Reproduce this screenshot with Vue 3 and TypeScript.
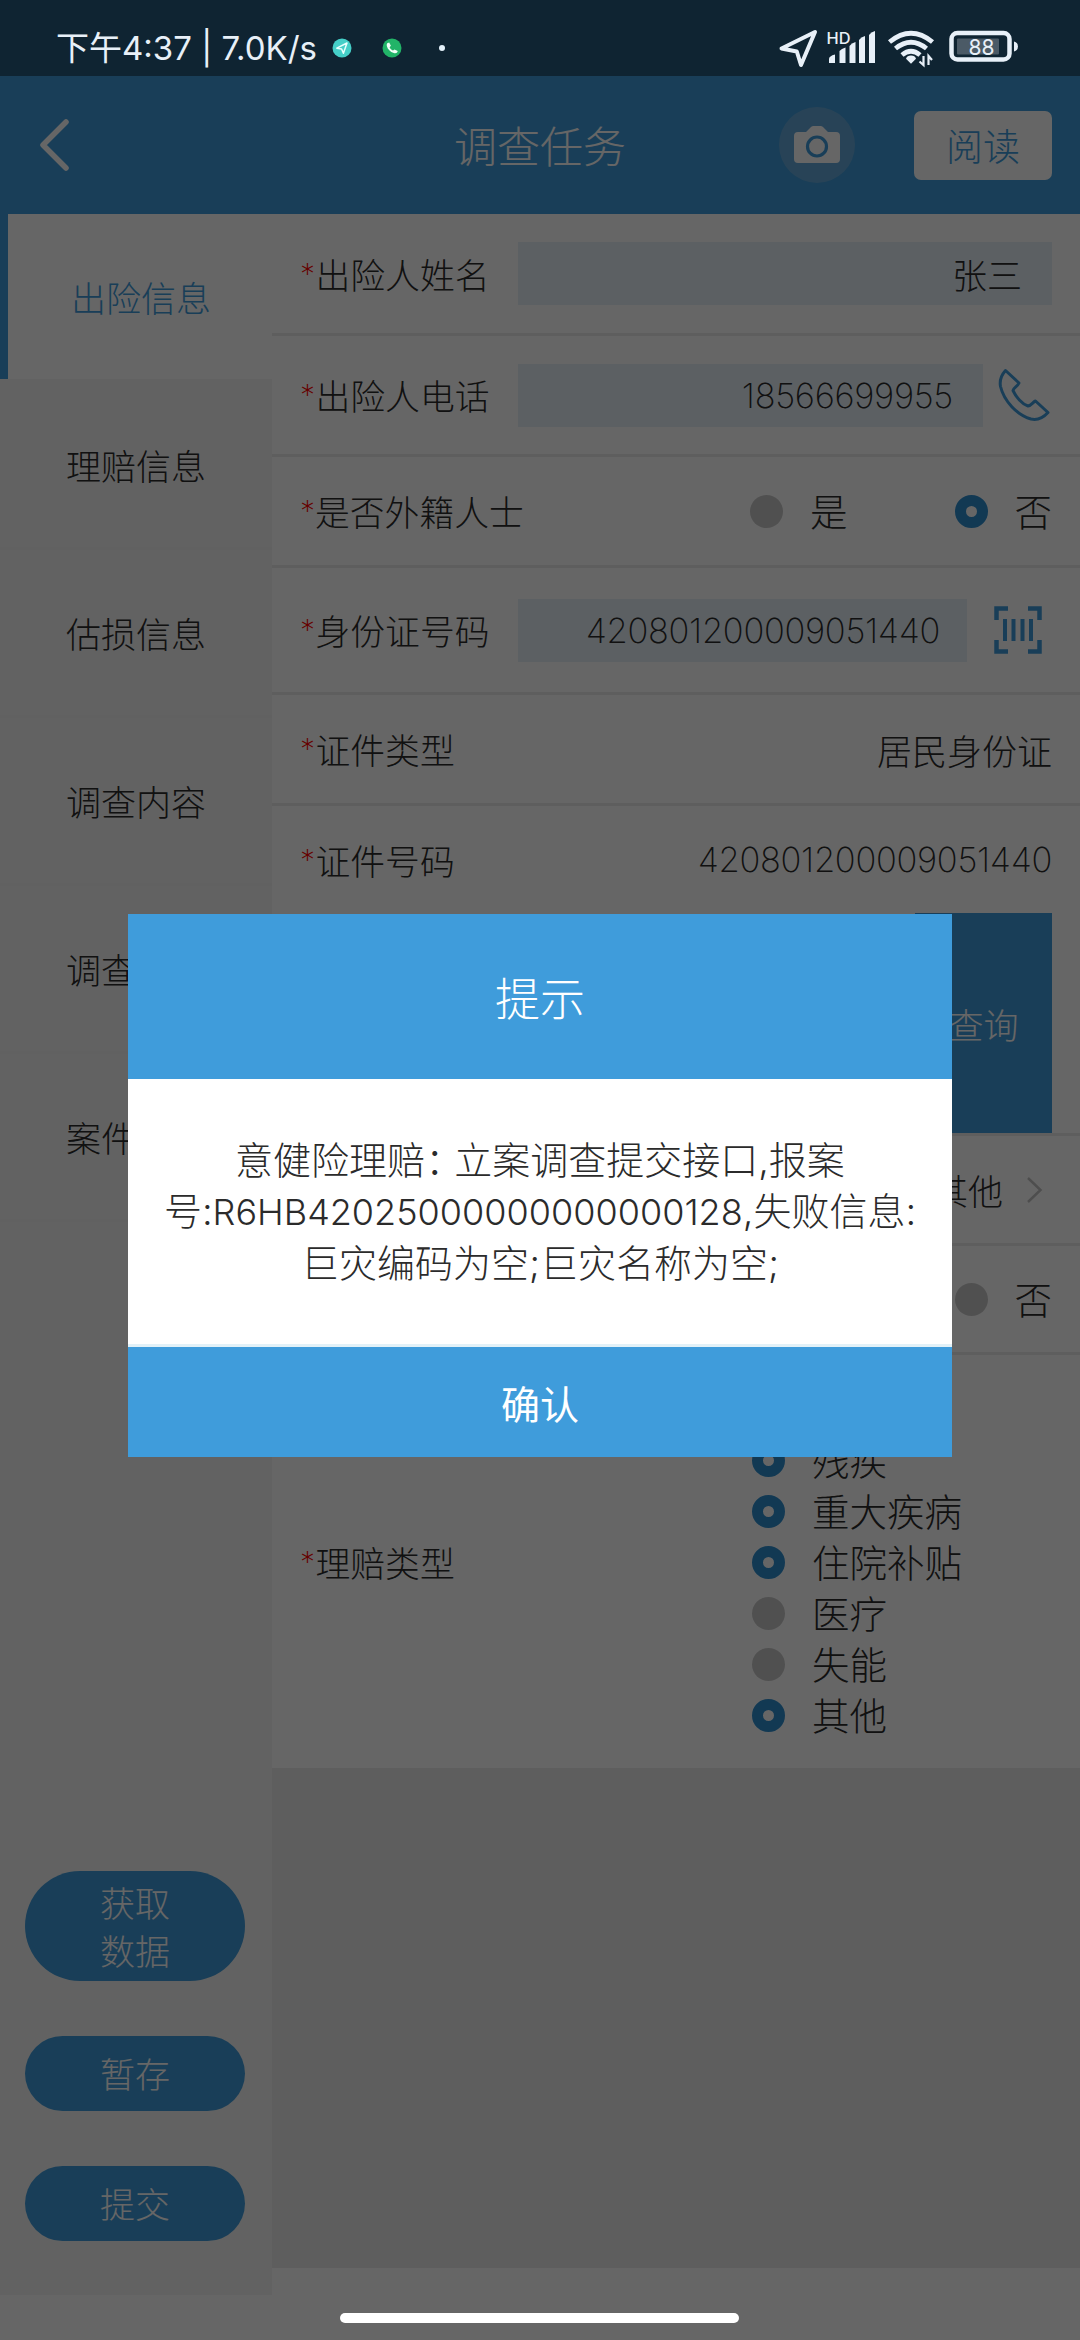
<script setup lang="ts">
interface Option {
  text: string
  checked: boolean
}

const navItems: string[] = ['出险信息', '理赔信息', '估损信息', '调查内容', '调查', '案件']

const claimTypes: Option[] = [
  { text: '残疾', checked: true },
  { text: '重大疾病', checked: true },
  { text: '住院补贴', checked: true },
  { text: '医疗', checked: false },
  { text: '失能', checked: false },
  { text: '其他', checked: true },
]

const foreigner: Option[] = [
  { text: '是', checked: false },
  { text: '否', checked: true },
]

const actions: string[][] = [['获取', '数据'], ['暂存'], ['提交']]
</script>

<template>
  <div class="screen">
    <div class="status">
      <span class="clock">下午<i>4:37 | 7.0K/s</i></span>
      <svg class="notices" width="120" height="24" viewBox="0 0 120 24">
        <circle cx="10" cy="12" r="9.5" fill="#45cfc8" />
        <path d="M4.8 12.2 15 7 11.400 17.200 9.600 13z" fill="none" stroke="#e8fffd" stroke-width="1.500" stroke-linejoin="round" />
        <circle cx="60" cy="12" r="9.500" fill="#22b468" />
        <path d="M55.200 7.300l2-.9 1.700 3.300-1.300 1.500c.8 1.700 1.900 2.700 3.400 3.400l1.500-1.200 3.200 1.700c-.3 2.100-2.200 2.500-3.900 1.900-3.700-1.200-6-3.500-7-7-.2-1-.1-1.900.4-2.700z" fill="#f2fff8" />
        <circle cx="110" cy="12" r="3" fill="#e4f1fa" />
      </svg>
      <svg class="system" width="242" height="40" viewBox="0 0 242 40">
        <path d="M3.500 20.500 37 4 23 37l-4.200-13.500z" fill="none" stroke="#e8f0f8" stroke-width="4" stroke-linejoin="round" />
        <text x="48.500" y="15.500" class="hd" textLength="24" lengthAdjust="spacingAndGlyphs">HD</text>
        <g fill="#e8f0f8">
          <path d="M51 35v-4q0-3 6-4.500V35z" />
          <path d="M61.500 35V23q2-2.500 6-3.500V35z" />
          <path d="M71.500 35V18q2-3 6-4V35z" />
          <path d="M81 35V12q2-3 6-4V35z" />
          <path d="M91 35V7q2-3 6-4V35z" />
        </g>
        <g fill="none" stroke="#e8f0f8" stroke-width="4.800">
          <path d="M111.500 14Q133 -3.500 154.500 14" />
          <path d="M117.500 20.500Q133 8 148.500 20.500" />
          <path d="M124 27Q133 19.500 142 27" />
        </g>
        <path d="M133 27.500q4 0 5 3.200l-5 5-5-5q1-3.200 5-3.200z" fill="#e8f0f8" />
        <path d="M145.500 28v9l-4-3.500M150.500 37v-9l3.500 4" fill="none" stroke="#e8f0f8" stroke-width="2.200" />
        <rect x="173.500" y="5" width="58" height="26.500" rx="6" fill="none" stroke="#e8f0f8" stroke-width="4.500" />
        <rect x="179" y="10.500" width="42" height="16" rx="1" fill="#4b5a66" />
        <path d="M236 13.500q4 1 4 5t-4 5z" fill="#e8f0f8" />
        <text x="190.500" y="26.500" class="level" textLength="26" lengthAdjust="spacingAndGlyphs">88</text>
      </svg>
    </div>

    <div class="app">
      <header class="header">
        <svg class="back" width="34" height="56" viewBox="0 0 34 56">
          <path d="M28 5 5 28l23 23" fill="none" stroke="#fff" stroke-width="5.500" stroke-linecap="round" stroke-linejoin="round" />
        </svg>
        <h1>调查任务</h1>
        <span class="camera">
          <svg width="48" height="40" viewBox="0 0 48 40">
            <path d="M5 7h8l5-5q1-1 2.500-1h7Q29 1 30 2l5 5h8q4 0 4 4v23q0 4-4 4H5q-4 0-4-4V11q0-4 4-4z" fill="#fff" />
            <circle cx="24" cy="21.500" r="9.500" fill="none" stroke="#3f9cdb" stroke-width="3.200" />
          </svg>
        </span>
        <button class="read">阅读</button>
      </header>

      <div class="body">
        <aside class="side">
          <nav>
            <div v-for="(item, i) in navItems" :key="item" class="nav" :class="{ active: i === 0 }">
              <span>{{ item }}</span>
            </div>
          </nav>
          <div class="actions">
            <button v-for="lines in actions" :key="lines[0]" :class="{ tall: lines.length > 1 }">
              <span v-for="line in lines" :key="line">{{ line }}</span>
            </button>
          </div>
        </aside>

        <main class="form">
          <div class="row r1">
            <label><b>*</b>出险人姓名</label>
            <div class="input">张三</div>
          </div>
          <div class="row r2">
            <label><b>*</b>出险人电话</label>
            <div class="input num">18566699955</div>
            <svg class="phone" width="54" height="54" viewBox="0 0 54 54">
              <path d="M8.500 2.500C4 7.500 2.500 13 3.500 18.500 7 33 20 47 34 51c7 1.500 12.500-1.500 17-6.500L38.500 33c-2.500 1-4 4.500-7.500 5-6-2-12-9-15-15.500.5-3 4.500-4 6-7.500z" fill="none" stroke="#3f9cdb" stroke-width="3" stroke-linejoin="round" />
            </svg>
          </div>
          <div class="row r3">
            <label><b>*</b>是否外籍人士</label>
            <div class="choices">
              <span v-for="o in foreigner" :key="o.text" class="option">
                <i class="radio" :class="{ on: o.checked }"></i><span>{{ o.text }}</span>
              </span>
            </div>
          </div>
          <div class="row r4">
            <label><b>*</b>身份证号码</label>
            <div class="input num">420801200009051440</div>
            <svg class="scan" width="48" height="48" viewBox="0 0 48 48">
              <path d="M2.500 14V2.500H14M34 2.500h11.500V14M45.500 34v11.500H34M14 45.500H2.500V34" fill="none" stroke="#3f9cdb" stroke-width="4.500" />
              <path d="M11 13v22M19.500 13v22M28.500 13v22M37 13v22" stroke="#3f9cdb" stroke-width="4" />
            </svg>
          </div>
          <div class="row r5">
            <label><b>*</b>证件类型</label>
            <span class="value">居民身份证</span>
          </div>
          <div class="row r6">
            <label><b>*</b>证件号码</label>
            <span class="value num">420801200009051440</span>
          </div>
          <div class="row query"><button>查询</button></div>
          <div class="row r7">
            <span class="value">其他</span>
            <svg class="more" width="18" height="30" viewBox="0 0 18 30">
              <path d="M2 3l12.500 12L2 27" fill="none" stroke="#c4c4c4" stroke-width="2.500" />
            </svg>
          </div>
          <div class="row r8">
            <span class="option"><i class="radio"></i><span>否</span></span>
          </div>
          <div class="row r9">
            <label><b>*</b>理赔类型</label>
            <div class="list">
              <span v-for="o in claimTypes" :key="o.text" class="option">
                <i class="radio" :class="{ on: o.checked }"></i><span>{{ o.text }}</span>
              </span>
            </div>
          </div>
          <div class="blank"></div>
        </main>
      </div>
    </div>

    <div class="mask"></div>

    <section class="dialog">
      <h2>提示</h2>
      <div class="message">
        <p>意健险理赔<span class="colon">：</span>立案调查提交接口,报案</p>
        <p>号:<span class="code">R6HB42025000000000000128</span>,失败信息:</p>
        <p>巨灾编码为空;巨灾名称为空;</p>
      </div>
      <button>确认</button>
    </section>

    <div class="home"></div>
  </div>
</template>

<style>
body {
  margin: 0;
  background: #666;
}
</style>

<style scoped>
.screen {
  position: relative;
  width: 1080px;
  height: 2340px;
  overflow: hidden;
  background: #fff;
  color: #2b2b2b;
  font-family: Inter, "Noto Sans CJK SC", sans-serif;
  font-weight: 300;
  font-size: 35px;
  display: flex;
  flex-direction: column;
}
.screen * {
  box-sizing: border-box;
}
button {
  border: 0;
  padding: 0;
  margin: 0;
  font: inherit;
  color: #fff;
  background: #3f9cdb;
  display: flex;
  align-items: center;
  justify-content: center;
}
h1, h2, p {
  margin: 0;
  font-weight: 300;
}
i {
  font-style: normal;
}
svg {
  display: block;
  flex: none;
}

/* Status bar stays above the dimming mask */
.status {
  position: relative;
  z-index: 2;
  height: 76px;
  flex: none;
  display: flex;
  align-items: center;
  padding: 19px 60px 0 56px;
  background: #0f2432;
  color: #e8f0f8;
}
.clock {
  width: 276px;
  font-size: 33px;
  font-weight: 400;
  line-height: 40px;
  white-space: nowrap;
}
.clock i {
  letter-spacing: 0;
}
.system {
  margin-left: auto;
}
.hd {
  font: 500 16px Inter, sans-serif;
  fill: #e8f0f8;
}
.level {
  font: 400 22px Inter, sans-serif;
  fill: #e8f0f8;
}

.app {
  flex: 1;
  display: flex;
  flex-direction: column;
}
.header {
  height: 138px;
  flex: none;
  display: flex;
  align-items: center;
  padding: 0 28px 0 38px;
  background: #3f9cdb;
  color: #fff;
}
.header h1 {
  margin-left: 382px;
  padding-top: 3px;
  width: 172px;
  font-size: 43px;
  line-height: 60px;
  white-space: nowrap;
}
.camera {
  width: 76px;
  height: 76px;
  margin-left: 153px;
  border-radius: 50%;
  background: rgba(255, 220, 210, 0.2);
  display: flex;
  align-items: center;
  justify-content: center;
}
.read {
  width: 138px;
  height: 69px;
  margin-left: auto;
  border-radius: 7px;
  background: #fff;
  color: #3f9cdb;
  font-size: 37px;
}

.body {
  flex: 1;
  display: flex;
}
.side {
  width: 272px;
  height: 2081px;
  flex: none;
  background: #f6f6f6;
  display: flex;
  flex-direction: column;
  justify-content: space-between;
}
.nav {
  height: 168px;
  padding-left: 66px;
  display: flex;
  align-items: center;
  border-bottom: 3px solid #f3f3f3;
}
.nav.active {
  height: 165px;
  margin-bottom: 3px;
  padding-left: 63px;
  border-left: 8px solid #3f9cdb;
  border-bottom: 0;
  background: #fff;
  color: #3f9cdb;
}
.actions {
  display: flex;
  flex-direction: column;
  gap: 55px;
  padding: 0 27px 54px 25px;
}
.actions button {
  height: 75px;
  padding-top: 2px;
  border-radius: 55px;
  flex-direction: column;
}
.actions button.tall {
  height: 110px;
  padding-top: 4px;
}
.actions span {
  line-height: 48px;
}

.form {
  flex: 1;
}
.row {
  display: flex;
  align-items: center;
  padding: 0 28px;
  border-bottom: 3px solid #ececec;
}
label {
  width: 218px;
  flex: none;
  white-space: nowrap;
  font-size: 34.8px;
  display: flex;
  align-items: center;
}
label b {
  width: 15.5px;
  font: 200 30px Inter, sans-serif;
  line-height: 46px;
  color: #f00;
}
.input {
  flex: 1;
  height: 63px;
  padding-right: 30px;
  background: #e6f0f8;
  display: flex;
  align-items: center;
  justify-content: flex-end;
}
.num {
  font-size: 34.5px;
  font-weight: 200;
  letter-spacing: -0.3px;
}
.value {
  margin-left: auto;
}
.r1 { height: 122px; }
.r2 { height: 121px; }
.r3 { height: 111px; }
.r4 { height: 127px; }
.r5 { height: 111px; }
.r6 {
  height: 107px;
  border-bottom: 0;
}
.r7 { height: 110px; }
.r8 { height: 109px; }
.r9 {
  height: 413px;
  border-bottom: 0;
}
.phone {
  margin: 0 1px 0 14px;
}
.r4 .input {
  padding-right: 27px;
}
.scan {
  margin: 0 10px 0 27px;
}
.query {
  height: 223px;
  align-items: stretch;
  justify-content: flex-end;
}
.query button {
  width: 137px;
}
.more {
  margin: 0 8px 0 23px;
}
.option {
  display: flex;
  align-items: center;
  font-size: 37.5px;
  line-height: 51px;
  height: 51px;
  white-space: nowrap;
}
.option span {
  padding-top: 2px;
}
.radio {
  width: 33px;
  height: 33px;
  margin-right: 27px;
  border-radius: 50%;
  background: #c9c9c9;
}
.radio.on {
  background: #fff;
  border: 11px solid #2e8fd0;
}
.choices {
  margin-left: auto;
  display: flex;
  gap: 107px;
}
.r8 .option {
  margin-left: auto;
}
.list {
  margin-left: 234px;
  padding-top: 53px;
}
.blank {
  height: 500px;
  background: #ececec;
}

.mask {
  position: absolute;
  inset: 0;
  background: rgba(0, 0, 0, 0.6);
}
.dialog {
  position: absolute;
  left: 128px;
  top: 914px;
  width: 824px;
  height: 543px;
  background: #fff;
  display: flex;
  flex-direction: column;
}
.dialog h2 {
  height: 165px;
  background: #3f9cdb;
  color: #fff;
  font-size: 45px;
  display: flex;
  align-items: center;
  justify-content: center;
}
.message {
  flex: 1;
  padding-top: 1px;
  border-bottom: 3px solid #e2f1f8;
  display: flex;
  flex-direction: column;
  justify-content: center;
  font-size: 38px;
  line-height: 51px;
  text-align: center;
  white-space: nowrap;
}
.colon {
  letter-spacing: -9px;
}
.code {
  font-size: 36px;
}
.dialog button {
  height: 110px;
  font-size: 39px;
  font-weight: 400;
}
.home {
  position: absolute;
  left: 340px;
  top: 2313px;
  width: 399px;
  height: 10px;
  border-radius: 5px;
  background: #fff;
}
</style>
